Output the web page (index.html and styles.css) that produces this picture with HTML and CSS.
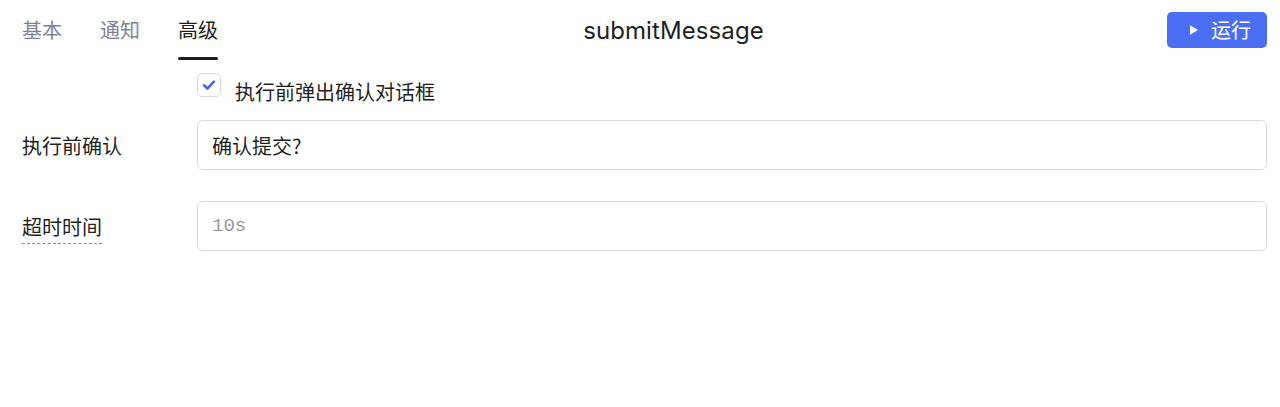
FILE: index.html
```html
<!DOCTYPE html>
<html lang="zh">
<head>
<meta charset="utf-8">
<link rel="stylesheet" href="styles.css">
</head>
<body>
<div class="header">
  <nav class="tabs">
    <span class="tab">基本</span>
    <span class="tab">通知</span>
    <span class="tab active">高级</span>
  </nav>
  <div class="title">submitMessage</div>
  <div class="actions">
    <button class="run-btn"><svg class="play" width="10" height="12" viewBox="0 0 10 12"><path d="M1 1.2 L9 6 L1 10.8 Z" fill="#fff"/></svg><span>运行</span></button>
  </div>
</div>
<div class="form">
  <label class="check-row">
    <span class="checkbox"><svg width="16" height="16" viewBox="0 0 16 16"><path d="M3 8.3 L6.4 11.5 L13 4.6" fill="none" stroke="#4a67f0" stroke-width="2.6" stroke-linecap="round" stroke-linejoin="round"/></svg></span>
    <span class="check-label">执行前弹出确认对话框</span>
  </label>
  <div class="field-row first">
    <div class="field-label">执行前确认</div>
    <div class="input"><span class="value">确认提交?</span></div>
  </div>
  <div class="field-row second">
    <div class="field-label"><span class="dashed">超时时间</span></div>
    <div class="input"><span class="placeholder">10s</span></div>
  </div>
</div>
</body>
</html>
```

FILE: styles.css
```css
* { box-sizing: border-box; }
html, body { margin: 0; padding: 0; background: #fff; }
body {
  font-family: "Inter", "Noto Sans CJK SC", sans-serif;
  color: #222;
}
.header {
  display: grid;
  grid-template-columns: 1fr auto 1fr;
  align-items: center;
  height: 60px;
  padding: 0 13px 0 22px;
}
.tabs {
  display: flex;
  gap: 38px;
  height: 60px;
}
.tab {
  font-family: "Noto Sans CJK SC", sans-serif;
  font-size: 20px;
  line-height: 60px;
  color: #7f8399;
  height: 60px;
  position: relative;
}
.tab.active { color: #1f1f1f; }
.tab.active::after {
  content: "";
  position: absolute;
  left: 0;
  right: 0;
  bottom: 0;
  height: 3px;
  border-radius: 2px;
  background: #1f1f1f;
}
.title {
  font-family: "Inter", sans-serif;
  font-size: 24px;
  line-height: 30px;
  padding-top: 2px;
  margin-left: 58px;
  color: #1f1f1f;
  letter-spacing: 0.1px;
}
.actions { display: flex; justify-content: flex-end; }
.run-btn {
  display: flex;
  align-items: center;
  gap: 12px;
  width: 100px;
  height: 36px;
  padding: 0 0 0 22px;
  border: none;
  border-radius: 5px;
  background: #4c6ef5;
  color: #fff;
  font-family: "Noto Sans CJK SC", sans-serif;
  font-size: 20px;
  line-height: 1;
}
.play { display: block; }
.form { padding: 0 13px 0 22px; }
.check-row {
  display: flex;
  align-items: flex-start;
  margin: 13px 0 0 175px;
  height: 32px;
}
.checkbox {
  width: 24px;
  height: 24px;
  border: 1px solid #d8dae2;
  border-radius: 5px;
  display: flex;
  align-items: center;
  justify-content: center;
  background: #fff;
}
.check-label {
  font-family: "Noto Sans CJK SC", sans-serif;
  font-size: 20px;
  line-height: 24px;
  margin: 7px 0 0 14px;
  color: #1f1f1f;
}
.field-row {
  display: grid;
  grid-template-columns: 175px 1fr;
  align-items: center;
}
.field-row.first { margin-top: 15px; }
.field-row.second { margin-top: 31px; }
.field-label {
  font-family: "Noto Sans CJK SC", sans-serif;
  font-size: 20px;
  color: #1f1f1f;
}
.dashed {
  display: inline-block;
  line-height: 26px;
  padding-bottom: 3px;
  border-bottom: 1px dashed #8b90a6;
  margin-top: 6px;
}
.input {
  height: 50px;
  border: 1px solid #d9dbe2;
  border-radius: 6px;
  display: flex;
  align-items: center;
  padding: 0 14px;
}
.value {
  font-family: "Noto Sans CJK SC", sans-serif;
  font-size: 20px;
  color: #1f1f1f;
}
.placeholder {
  font-family: "Liberation Mono", monospace;
  font-size: 19px;
  color: #9a9a9a;
}
```
